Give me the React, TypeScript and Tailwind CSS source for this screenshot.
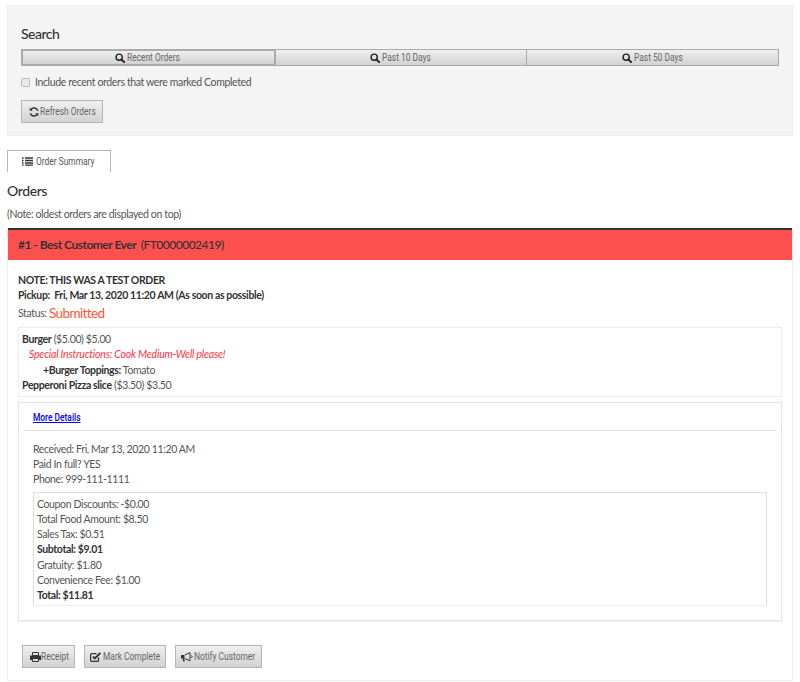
import { ReactNode } from "react";

const F = "font-['Lato','Roboto',sans-serif]";
const N = "font-['Roboto',sans-serif]";

function Search() {
  return (
    <svg width="10" height="10" viewBox="0 0 12 12" className="shrink-0">
      <circle cx="5" cy="5" r="3.7" fill="none" stroke="#222" strokeWidth="1.7" />
      <path d="M7.8 7.8 L11 11" stroke="#222" strokeWidth="2.3" strokeLinecap="round" />
    </svg>
  );
}

function Refresh() {
  return (
    <svg width="10" height="10" viewBox="0 0 12 12" className="shrink-0">
      <path d="M10.5 4.5A4.8 4.8 0 0 0 2.2 3" fill="none" stroke="#333" strokeWidth="1.7" />
      <path d="M1.5 7.5A4.8 4.8 0 0 0 9.8 9" fill="none" stroke="#333" strokeWidth="1.7" />
      <path d="M0.8 0.8V4.6H4.6Z" fill="#333" />
      <path d="M11.2 11.2V7.4H7.4Z" fill="#333" />
    </svg>
  );
}

function List() {
  return (
    <svg width="11" height="9" viewBox="0 0 11 9" className="shrink-0">
      <path d="M0 1H1.6M3 1H11M0 3.5H1.6M3 3.5H11M0 6H1.6M3 6H11M0 8.2H1.6M3 8.2H11" stroke="#333" strokeWidth="1.3" />
    </svg>
  );
}

function Print() {
  return (
    <svg width="11" height="10" viewBox="0 0 11 10" className="shrink-0">
      <path d="M2.5 0.5H8.5V3.5H2.5Z" fill="none" stroke="#333" />
      <path d="M0 3.5H11V8H9V6.5H2V8H0Z" fill="#333" />
      <path d="M2.5 6.5H8.5V9.5H2.5Z" fill="none" stroke="#333" />
    </svg>
  );
}

function Edit() {
  return (
    <svg width="11" height="10" viewBox="0 0 11 10" className="shrink-0">
      <path d="M8.5 5.5V8.2A1.2 1.2 0 0 1 7.3 9.4H1.8A1.2 1.2 0 0 1 0.6 8.2V2.8A1.2 1.2 0 0 1 1.8 1.6H6.5" fill="none" stroke="#333" strokeWidth="1.3" />
      <path d="M3 4.6L4.8 6.4L10.4 1" fill="none" stroke="#333" strokeWidth="1.9" />
    </svg>
  );
}

function Bullhorn() {
  return (
    <svg width="12" height="10" viewBox="0 0 12 10" className="shrink-0">
      <path d="M0 3H3.5V6.5H0Z" fill="#333" />
      <path d="M1.5 6.5H3.2L3.8 9.5H2.2Z" fill="#333" />
      <path d="M3.8 3L9 0.6V8.8L3.8 6.5" fill="none" stroke="#333" strokeWidth="1" />
      <path d="M10 3.5L11.5 4.6L10 5.8" fill="none" stroke="#333" strokeWidth="0.8" />
    </svg>
  );
}

function Label({ children, m }: { children: ReactNode; m: string }) {
  return <span className={`inline-block origin-left scale-x-[0.8] whitespace-nowrap ${N} ${m}`}>{children}</span>;
}

function Btn({ icon, children, cls }: { icon: ReactNode; children: ReactNode; cls: string }) {
  return (
    <button className={`flex items-center justify-center whitespace-nowrap border bg-gradient-to-b from-[#efefef] to-[#d2d2d2] text-[10.5px] text-[#666] ${cls}`}>
      {icon}
      {children}
    </button>
  );
}

export default function App() {
  return (
    <div className={`h-[682px] w-[800px] overflow-hidden bg-white px-[7px] pt-[5px] text-[10.5px] leading-[15.15px] tracking-[-0.37px] text-[#555] ${F}`}>
      <section className="h-[131px] border border-[#eeeeee] bg-[#f4f4f4] px-[13px] pt-[20px]">
        <h2 className="text-[14px] leading-[16px] font-medium tracking-[-0.5px] text-[#333]">Search</h2>
        <div className="mt-[7px] flex h-[17px] tracking-normal">
          <Btn icon={<Search />} cls="h-[17px] flex-1 gap-[2px] border-2 border-[#aaaaaa]"><Label m="mr-[-11px]">Recent Orders</Label></Btn>
          <Btn icon={<Search />} cls="h-[17px] flex-1 gap-[2px] border-[#aaaaaa] border-l-0"><Label m="mr-[-12px]">Past 10 Days</Label></Btn>
          <Btn icon={<Search />} cls="h-[17px] flex-1 gap-[2px] border-[#aaaaaa] border-l-0"><Label m="mr-[-12px]">Past 50 Days</Label></Btn>
        </div>
        <label className="mt-[9px] flex h-[15px] items-center gap-[5px]">
          <span className="block h-[9px] w-[9px] shrink-0 rounded-[2px] border border-[#bbbbbb] bg-[#e9e9e9]" />
          <span>Include recent orders that were marked Completed</span>
        </label>
        <Btn icon={<Refresh />} cls="mt-[10px] h-[23px] w-[82px] gap-[1px] border-[#b5b5b5] tracking-normal"><Label m="mr-[-14px]">Refresh Orders</Label></Btn>
      </section>

      <div className="mt-[14px] flex h-[22px] w-[104px] items-center justify-center gap-[3px] border border-b-0 border-[#b5b5b5] text-[10.5px] tracking-normal">
        <List />
        <Label m="mr-[-14px]">Order Summary</Label>
      </div>

      <h2 className="mt-[11px] text-[14px] leading-[16px] font-medium tracking-[-0.4px] text-[#333]">Orders</h2>
      <p className="mt-[8px] leading-[15px]">(Note: oldest orders are displayed on top)</p>

      <article className="mt-[6px] h-[453px] w-[786px] border-x border-b border-[#eeeeee]">
        <header className="h-[32px] border-t-2 border-[#333333] bg-[#ff5050] pl-[10px] pt-[7px] text-[12px] font-bold tracking-[-0.5px] text-[#333]">
          #1 - Best Customer Ever&nbsp; <span className="font-medium">(FT0000002419)</span>
        </header>
        <div className="px-[10px] pt-[13px]">
          <div className="font-bold text-[#333]">NOTE: THIS WAS A TEST ORDER</div>
          <div className="font-bold text-[#333]">Pickup:&nbsp; Fri, Mar 13, 2020 11:20 AM (As soon as possible)</div>
          <div className="mt-px flex h-[19px] items-center">
            Status:&nbsp;<span className="text-[13.5px] tracking-[-0.6px] text-[#ff5533]">Submitted</span>
          </div>

          <div className="mt-[4px] h-[70px] w-[764px] border border-[#eeeeee] pl-[3px] pt-[4px]">
            <div><b className="text-[#333]">Burger</b> ($5.00) $5.00</div>
            <div className="pl-[7px] italic tracking-[-0.2px] text-[#ff3344]">Special Instructions: Cook Medium-Well please!</div>
            <div className="pl-[21px]"><b className="text-[#333]">+Burger Toppings:</b> Tomato</div>
            <div><b className="text-[#333]">Pepperoni Pizza slice</b> ($3.50) $3.50</div>
          </div>

          <div className="mt-[5px] h-[219px] w-[764px] border border-[#e4e4e4] px-[4px] pt-[7px] shadow-[0_1px_1px_rgba(0,0,0,0.05)]">
            <a className="ml-[10px] tracking-normal font-medium text-[#0000ee]" href="#"><Label m="mr-[-12px] underline">More Details</Label></a>
            <div className="mt-[5px] h-px bg-[#dddddd]" />
            <div className="mt-[10.6px] pl-[10px]">
              <div>Received: Fri, Mar 13, 2020 11:20 AM</div>
              <div>Paid In full? YES</div>
              <div>Phone: 999-111-1111</div>
            </div>
            <div className="ml-[10px] mt-[4.4px] h-[114px] w-[734px] border border-[#dddddd] border-b-[#eeeeee] pl-[3px] pt-[4px]">
              <div>Coupon Discounts: -$0.00</div>
              <div>Total Food Amount: $8.50</div>
              <div>Sales Tax: $0.51</div>
              <div className="font-bold text-[#333]">Subtotal: $9.01</div>
              <div>Gratuity: $1.80</div>
              <div>Convenience Fee: $1.00</div>
              <div className="font-bold text-[#333]">Total: $11.81</div>
            </div>
          </div>

          <div className="ml-[4px] mt-[24px] flex gap-[9px] tracking-normal">
            <Btn icon={<Print />} cls="h-[23px] w-[53px] border-[#b5b5b5]"><Label m="mr-[-8px]">Receipt</Label></Btn>
            <Btn icon={<Edit />} cls="h-[23px] w-[82px] gap-[2px] border-[#b5b5b5]"><Label m="mr-[-14px]">Mark Complete</Label></Btn>
            <Btn icon={<Bullhorn />} cls="h-[23px] w-[87px] gap-[1px] border-[#b5b5b5]"><Label m="mr-[-15px]">Notify Customer</Label></Btn>
          </div>
        </div>
      </article>
    </div>
  );
}
